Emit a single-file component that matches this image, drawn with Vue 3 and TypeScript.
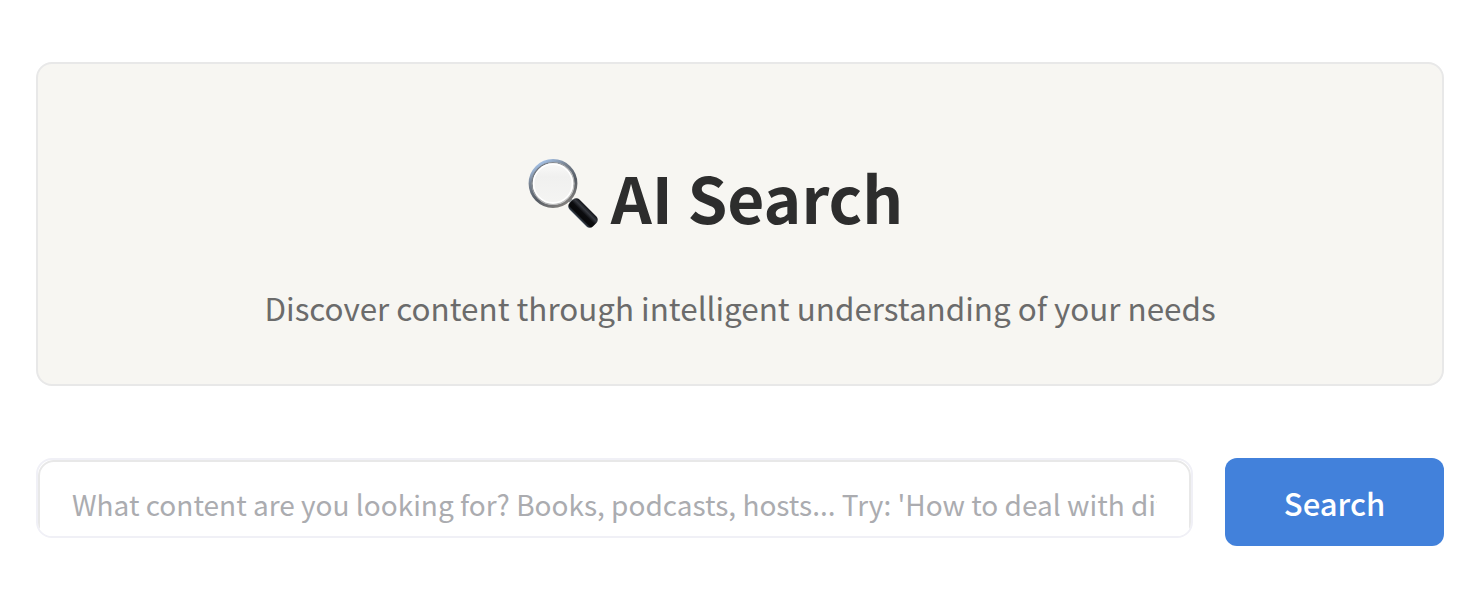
<script setup lang="ts">
import { ref } from 'vue'

const query = ref<string>('')
const placeholder = "What content are you looking for? Books, podcasts, hosts... Try: 'How to deal with difficult coll"
</script>

<template>
  <main class="page">
    <header class="hero">
      <h1 class="title">
        <svg class="glass" viewBox="0 0 72 72" aria-hidden="true">
          <defs>
            <linearGradient id="rim" x1="0.2" y1="0" x2="0.75" y2="1">
              <stop offset="0" stop-color="#a9c8f0" />
              <stop offset="0.3" stop-color="#788391" />
              <stop offset="0.65" stop-color="#555b63" />
              <stop offset="1" stop-color="#85827f" />
            </linearGradient>
            <linearGradient id="bevel" x1="0" y1="0" x2="1" y2="1">
              <stop offset="0" stop-color="#59616c" />
              <stop offset="0.5" stop-color="#a9abad" />
              <stop offset="1" stop-color="#c9c9c7" />
            </linearGradient>
            <linearGradient id="lens" x1="0" y1="0" x2="0" y2="1">
              <stop offset="0" stop-color="#fbfbfa" />
              <stop offset="0.35" stop-color="#f0f0ef" />
              <stop offset="1" stop-color="#f5f5f3" />
            </linearGradient>
            <linearGradient id="grip" x1="0" y1="0" x2="0" y2="1">
              <stop offset="0" stop-color="#111318" />
              <stop offset="0.25" stop-color="#363940" />
              <stop offset="0.5" stop-color="#0b0c0f" />
              <stop offset="0.8" stop-color="#08090b" />
              <stop offset="1" stop-color="#3d4856" />
            </linearGradient>
          </defs>
          <path d="M41 41 L47 47" stroke="#92979b" stroke-width="4" />
          <circle cx="26" cy="26.5" r="22.8" fill="url(#lens)" stroke="url(#rim)" stroke-width="3.2" />
          <circle cx="26" cy="26.5" r="20.9" fill="none" stroke="url(#bevel)" stroke-width="1.4" />
          <circle cx="26" cy="26.5" r="19.4" fill="none" stroke="#ffffff" stroke-width="1.6" />
          <rect x="-16.5" y="-7" width="33" height="14" rx="4.5" fill="url(#grip)" transform="translate(56 56) rotate(45)" />
        </svg>
        <span>AI Search</span>
      </h1>
      <p class="subtitle">Discover content through intelligent understanding of your needs</p>
    </header>
    <form class="search" @submit.prevent>
      <div class="field">
        <input v-model="query" class="input" type="text" :placeholder="placeholder" aria-label="Search content" />
      </div>
      <button class="button" type="submit">Search</button>
    </form>
  </main>
</template>

<style>
body {
  background: #ffffff;
}
</style>

<style scoped>
.page {
  box-sizing: border-box;
  height: 592px;
  padding: 62px 38px 0 36px;
  overflow: hidden;
  font-family: "Noto Sans CJK SC", "Noto Sans", sans-serif;
}
.hero {
  box-sizing: border-box;
  height: 324px;
  padding-top: 82px;
  border: 2px solid #e8e8e8;
  border-radius: 16px;
  background: #f7f6f2;
}
.title {
  display: flex;
  justify-content: center;
  gap: 12px;
  height: 100px;
  margin: 0;
  padding-right: 50px;
  color: #2d2d2d;
  font-size: 64px;
  font-weight: 700;
  line-height: 100px;
  white-space: nowrap;
}
.glass {
  flex: none;
  width: 72px;
  height: 72px;
  margin-top: 11px;
}
.subtitle {
  margin: 40px 0 0;
  color: #6b6b6b;
  font-size: 31.4px;
  font-weight: 400;
  line-height: 44px;
  text-align: center;
  white-space: nowrap;
}
.search {
  display: flex;
  align-items: flex-start;
  gap: 32px;
  margin-top: 72px;
}
.field {
  box-sizing: border-box;
  flex: 1;
  height: 80px;
  overflow: hidden;
  border: 2px solid #f0f0f6;
  border-radius: 16px;
}
.input {
  display: block;
  box-sizing: border-box;
  width: 100%;
  height: 88px;
  padding: 0 32px;
  border: 2px solid #e8e8e8;
  border-radius: 16px;
  outline: none;
  background: #ffffff;
  color: #2d2d2d;
  font-family: inherit;
  font-size: 28px;
}
.input::placeholder {
  color: #abacb0;
  opacity: 1;
}
.button {
  width: 219px;
  height: 88px;
  padding: 0;
  border: 0;
  border-radius: 12px;
  background: #4281db;
  color: #ffffff;
  font-family: inherit;
  font-size: 31px;
  font-weight: 500;
}
</style>
